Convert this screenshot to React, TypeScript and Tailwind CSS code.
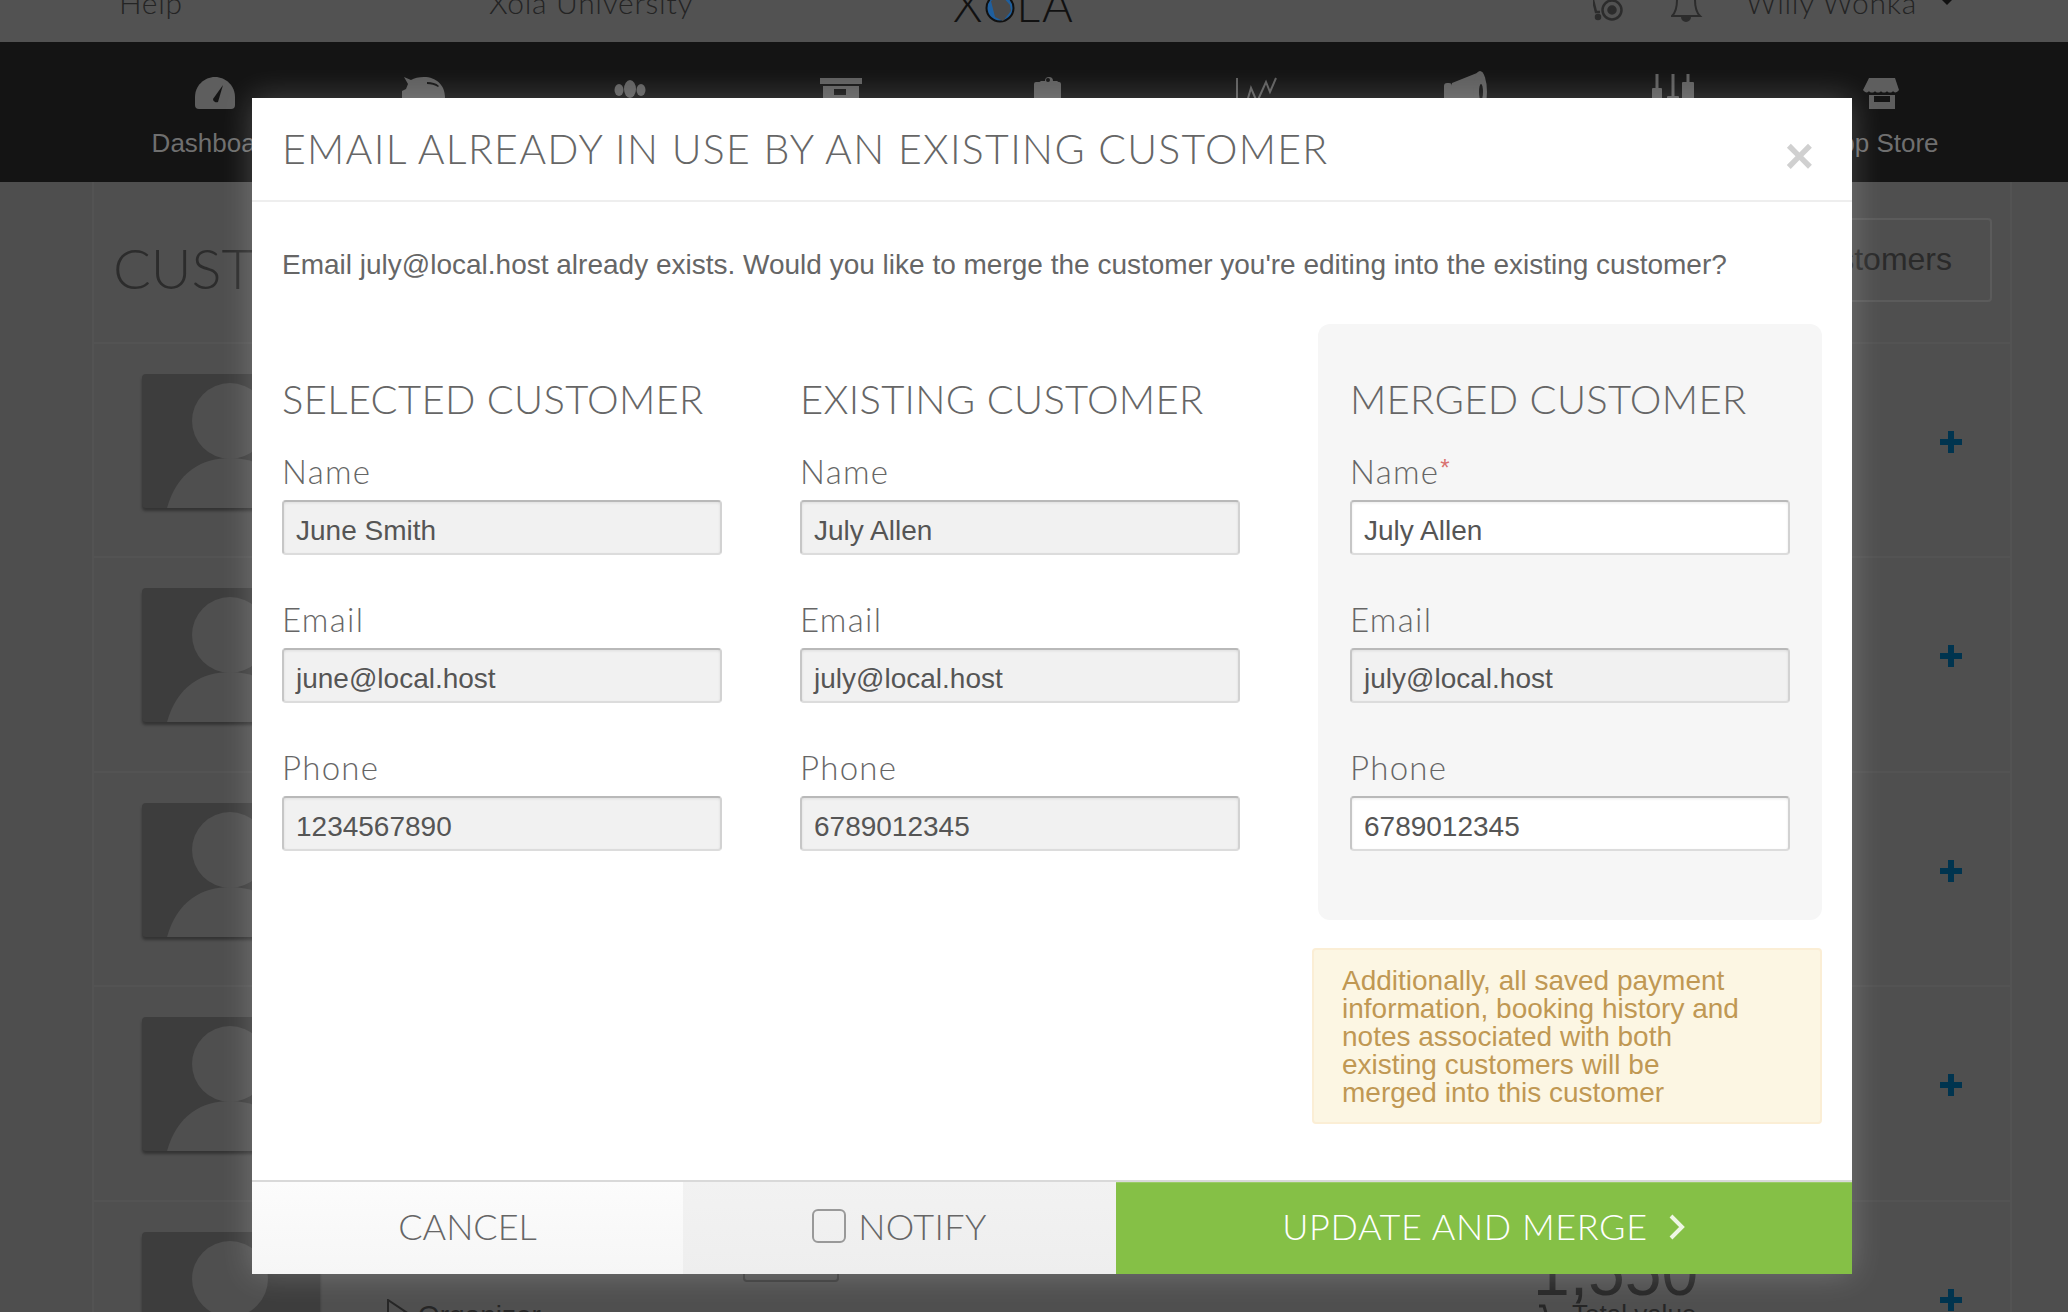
import React from "react";

const HEAD = "font-['Lato',sans-serif] font-light";
const BODY = "font-['Liberation_Sans',Arial,sans-serif]";

const navIcons: React.ReactNode[] = [
  <g key="g">
    <path d="M22 9C33 9 42 18 42 29v8a4 4 0 0 1-4 4H6a4 4 0 0 1-4-4v-8C2 18 11 9 22 9Z" />
    <path d="M30 17 L20 31 a3.5 3.5 0 0 0 5 3 Z" fill="#141414" />
  </g>,
  <g key="p">
    <path d="M2 9l7 3c3-2 8-3 13-3 12 0 21 8 21 20 0 6-3 11-6 14H8c-3-3-5-6-6-10l-2-2v-8l4-2 2-5Z" />
    <path d="M25 14c5 0 9 1 12 4l-1 1c-3-2-7-3-11-3Z" fill="#141414" />
  </g>,
  <g key="d">
    <ellipse cx="9" cy="22" rx="4.5" ry="6" />
    <ellipse cx="20" cy="21" rx="6" ry="9" />
    <ellipse cx="31" cy="22" rx="4.5" ry="6" />
  </g>,
  <g key="a">
    <rect x="1" y="10" width="42" height="6" />
    <path d="M4 18h36v24H4Z" />
    <rect x="15" y="21" width="12" height="6" fill="#141414" />
  </g>,
  <g key="c">
    <path d="M14 13h4a4 4 0 0 1 8 0h4l3 2v4H11v-4Z" />
    <rect x="7" y="14" width="27" height="30" rx="2" />
    <circle cx="21" cy="12" r="2" fill="#141414" />
  </g>,
  <g key="l" fill="none" stroke="#5e5e5e" strokeWidth="2">
    <path d="M2 10V44" />
    <path d="M9 44L16 20L22 34L31 14L35 24L41 10" />
  </g>,
  <g key="m">
    <rect x="0" y="15" width="8" height="18" rx="3" />
    <path d="M8 15L33 5V44L8 33Z" />
    <ellipse cx="36" cy="24" rx="7" ry="21" />
    <ellipse cx="37" cy="24" rx="2" ry="8" fill="#141414" />
  </g>,
  <g key="s">
    <rect x="3.5" y="6" width="3" height="14" />
    <rect x="0" y="20" width="10" height="20" rx="1" />
    <rect x="19.5" y="6" width="3" height="22" />
    <rect x="15" y="28" width="12" height="14" rx="1" />
    <rect x="34.5" y="6" width="3" height="8" />
    <rect x="30" y="14" width="12" height="20" rx="1" />
  </g>,
  <g key="t">
    <path d="M8 10h26l4 12c-2 3-5 3-6 1-1 2-5 2-6 0-1 2-5 2-6 0-1 2-5 2-6 0-1 2-5 2-6 0-1 2-4 2-6-1Z" />
    <path d="M8 27h26v14H8Z" />
    <rect x="13" y="28" width="16" height="6" fill="#141414" />
  </g>,
];

function Avatar() {
  return (
    <div className="w-[178px] h-[134px] shrink-0 rounded bg-[#3d3d3d] overflow-hidden shadow-[0_3px_3px_rgba(0,0,0,0.35)]">
      <svg width="178" height="134" viewBox="0 0 178 134" fill="#4f4f4f">
        <circle cx="88" cy="47" r="38" />
        <path d="M25 134C35 98 60 84 88 84C116 84 141 98 151 134Z" />
      </svg>
    </div>
  );
}

function Plus() {
  return (
    <svg width="22" height="22" viewBox="0 0 22 22" fill="#00344f">
      <rect x="8" y="0" width="6" height="22" />
      <rect x="0" y="8" width="22" height="6" />
    </svg>
  );
}

function Row({ children }: { children?: React.ReactNode }) {
  return (
    <div className="h-[214.4px] shrink-0 border-b-2 border-[#535353] flex pl-[48px] pt-[30px]">
      <Avatar />
      <div className="flex-1 flex">{children}</div>
      <div className="w-[22px] mr-[48px] mt-[57px]">
        <Plus />
      </div>
    </div>
  );
}

type FieldProps = { label: string; value: string; editable?: boolean; required?: boolean };

function Field({ label, value, editable, required, first }: FieldProps & { first: boolean }) {
  return (
    <div className="w-[440px]">
      <div className={`${HEAD} ${first ? "h-[77px]" : "h-[93px]"} flex items-end pb-[9px] text-[33px] leading-[40px] tracking-[1.3px] text-[#666]`}>
        {label}
        {required && <span className={`${BODY} text-[#d9716f] text-[24px] font-normal self-end mb-[11px] ml-[1px] leading-none`}>*</span>}
      </div>
      <div
        className={`${BODY} h-[55px] rounded-[4px] border-2 border-t-[#b9b9b9] border-l-[#c6c6c6] border-r-[#d2d2d2] border-b-[#dcdcdc] pl-[12px] pt-[6px] flex items-center text-[28px] text-[#555] shadow-[inset_0_1px_3px_rgba(0,0,0,0.08)] ${editable ? "bg-white" : "bg-[#f1f1f1]"}`}
      >
        {value}
      </div>
    </div>
  );
}

function Column({ title, rows }: { title: string; rows: FieldProps[] }) {
  return (
    <div className="w-[440px]">
      <div className={`${HEAD} h-[99px] flex items-end text-[40px] leading-[48px] tracking-[0.3px] text-[#666] whitespace-nowrap`}>{title}</div>
      {rows.map((r, i) => (
        <Field key={r.label} {...r} first={i === 0} />
      ))}
    </div>
  );
}

export default function App() {
  return (
    <div className="relative w-[2068px] h-[1312px] overflow-hidden bg-[#4e4e4e] flex flex-col">
      {/* top bar */}
      <div className={`${HEAD} h-[42px] shrink-0 bg-[#525252] flex items-start pl-[119px] text-[30px] leading-none tracking-[0.7px] text-[#242424]`}>
        <div className="w-[370px] -mt-[13px]">Help</div>
        <div className="w-[464px] -mt-[13px] whitespace-nowrap">Xola University</div>
        <div className="w-[640px] -mt-[19px] flex items-start text-[47px] leading-none text-[#111] tracking-[2px]">
          <span>X</span>
          <svg width="30" height="30" viewBox="0 0 30 30" className="mt-[12px] mx-[1px]">
            <circle cx="15" cy="15" r="13.5" fill="#1f5f9e" stroke="#111" strokeWidth="2" />
            <path d="M6 8L16 2L25 12L26 18L18 28L10 24Z" fill="#4a4a4a" />
          </svg>
          <span>LA</span>
        </div>
        <svg width="30" height="22" viewBox="0 0 30 22" fill="none" stroke="#2c2c2c" strokeWidth="2.5" className="w-[78px] shrink-0" preserveAspectRatio="xMinYMin meet">
          <path d="M0 0l3 12h4" />
          <circle cx="19" cy="10" r="9.5" />
          <circle cx="19" cy="10" r="3.5" fill="#2c2c2c" />
          <circle cx="5" cy="17" r="2" fill="#2c2c2c" />
        </svg>
        <svg width="30" height="22" viewBox="0 0 30 22" fill="none" stroke="#2c2c2c" strokeWidth="2" className="w-[75px] shrink-0" preserveAspectRatio="xMinYMin meet">
          <path d="M6 0c0 8-2 13-5 16h28c-3-3-5-8-5-16" />
          <path d="M11 17a4 4 0 0 0 8 0" fill="#2c2c2c" />
        </svg>
        <div className="w-[195px] -mt-[13px] whitespace-nowrap">Willy Wonka</div>
        <svg width="12" height="6" viewBox="0 0 12 6" fill="#111" className="-mt-[1px]">
          <path d="M0 0h12L6 6Z" />
        </svg>
      </div>

      {/* nav */}
      <div className="h-[140px] shrink-0 bg-[#141414] grid grid-cols-9 pl-[111px] pr-[81px] pt-[26px]">
        {navIcons.map((icon, i) => (
          <div key={i} className="flex flex-col items-center">
            <svg width="44" height="44" viewBox="0 0 44 44" fill="#5e5e5e">
              {icon}
            </svg>
            <div className={`${BODY} mt-[18px] text-[26px] leading-none text-[#6f6f6f] whitespace-nowrap ${i === 8 ? "pr-[4px]" : ""}`}>
              {i === 0 ? "Dashboard" : i === 8 ? "App Store" : ""}
            </div>
          </div>
        ))}
      </div>

      {/* page panel */}
      <div className="mx-[92px] w-[1920px] flex-1 border-x-2 border-[#535353] bg-[#4f4f4f]">
        <div className="h-[162px] border-b-2 border-[#535353] flex items-start justify-between pl-[19px] pr-[18px]">
          <div className={`${HEAD} text-[56px] leading-none text-[#2c2c2c] mt-[58px]`}>CUSTOMERS</div>
          <div className={`${BODY} mt-[36px] w-[240px] h-[84px] rounded border-2 border-[#5b5b5b] flex items-center justify-end pr-[38px] pb-[2px] text-[32px] text-[#2a2a2a]`}>
            Customers
          </div>
        </div>
        <Row />
        <Row />
        <Row />
        <Row />
        <Row>
          <div className={`${BODY} ml-[66px] mt-[67px] w-[357px] shrink-0 flex items-start text-[28px] leading-none text-[#262626]`}>
            <svg width="22" height="26" viewBox="0 0 22 26" fill="none" stroke="#262626" strokeWidth="2" className="mr-[10px] shrink-0">
              <path d="M2 26V1l18 12L2 19" />
            </svg>
            <span className="mt-[3px]">Organizer</span>
          </div>
          <div className="-mt-[32px] w-[96px] h-[82px] shrink-0 rounded border-2 border-[#3a3a3a]" />
          <div className={`${BODY} ml-[694px] shrink-0 mt-[7px] flex flex-col items-start text-[#262626]`}>
            <div className="text-[66px] leading-none">1,550</div>
            <div className="-mt-[4px] ml-[5px] flex items-start text-[26px] leading-none">
              <svg width="26" height="24" viewBox="0 0 26 24" fill="none" stroke="#262626" strokeWidth="3" className="mr-[8px] mt-[2px]">
                <path d="M1 3h5l4 14h12" />
              </svg>
              <span>Total value</span>
            </div>
          </div>
        </Row>
      </div>

      {/* modal */}
      <div className="absolute left-[252px] top-[98px] w-[1600px] h-[1176px] bg-white flex flex-col shadow-[0_0_30px_rgba(255,255,255,0.22)]">
        <div className="h-[104px] shrink-0 border-b-2 border-[#eeeeee] flex justify-between pl-[30px] pr-[38px]">
          <div className={`${HEAD} mt-[26px] text-[41px] leading-[50px] tracking-[1.3px] text-[#666] whitespace-nowrap`}>
            EMAIL ALREADY IN USE BY AN EXISTING CUSTOMER
          </div>
          <div className={`${BODY} mt-[33px] text-[50px] leading-[50px] font-bold text-[#d0d0d0]`}>×</div>
        </div>

        <div className="flex-1 pl-[30px] pr-[30px]">
          <div className={`${BODY} mt-[47px] h-[75px] text-[28px] leading-[32px] text-[#666] whitespace-nowrap`}>
            Email july@local.host already exists. Would you like to merge the customer you're editing into the existing customer?
          </div>
          <div className="flex">
            <Column
              title="SELECTED CUSTOMER"
              rows={[
                { label: "Name", value: "June Smith" },
                { label: "Email", value: "june@local.host" },
                { label: "Phone", value: "1234567890" },
              ]}
            />
            <div className="ml-[78px]">
              <Column
                title="EXISTING CUSTOMER"
                rows={[
                  { label: "Name", value: "July Allen" },
                  { label: "Email", value: "july@local.host" },
                  { label: "Phone", value: "6789012345" },
                ]}
              />
            </div>
            <div className="ml-[72px] w-[510px] flex flex-col items-end">
              <div className="w-[504px] h-[596px] rounded-[12px] bg-[#f6f6f6] pl-[32px]">
                <Column
                  title="MERGED CUSTOMER"
                  rows={[
                    { label: "Name", value: "July Allen", editable: true, required: true },
                    { label: "Email", value: "july@local.host" },
                    { label: "Phone", value: "6789012345", editable: true },
                  ]}
                />
              </div>
              <div className={`${BODY} mt-[28px] w-[510px] h-[176px] rounded-[4px] border-2 border-[#fbeed5] bg-[#fcf6e3] pl-[28px] pt-[17px] text-[28px] leading-[28px] text-[#c09853]`}>
                Additionally, all saved payment
                <br />
                information, booking history and
                <br />
                notes associated with both
                <br />
                existing customers will be
                <br />
                merged into this customer
              </div>
            </div>
          </div>
        </div>

        <div className={`${HEAD} h-[94px] shrink-0 border-t-2 border-[#d9d9d9] flex text-[36px] text-[#666]`}>
          <div className="w-[431px] bg-gradient-to-b from-[#fcfcfc] to-[#f6f6f6] flex items-center justify-center pb-[4px]">CANCEL</div>
          <div className="w-[433px] bg-gradient-to-b from-[#f2f2f2] to-[#eeeeee] flex items-center justify-center pb-[4px] tracking-[0.4px]">
            <div className="w-[34px] h-[34px] rounded-[6px] border-2 border-[#999] mr-[12px]" />
            NOTIFY
          </div>
          <div className="flex-1 bg-[#85c046] border-t border-[#9acb66] text-white flex items-center justify-center pb-[5px] tracking-[0.6px]">
            UPDATE AND MERGE
            <svg width="18" height="26" viewBox="0 0 18 26" fill="none" stroke="#eef6e4" strokeWidth="4" className="ml-[20px] mt-[2px]">
              <path d="M3 2L14 13L3 24" />
            </svg>
          </div>
        </div>
      </div>
    </div>
  );
}
